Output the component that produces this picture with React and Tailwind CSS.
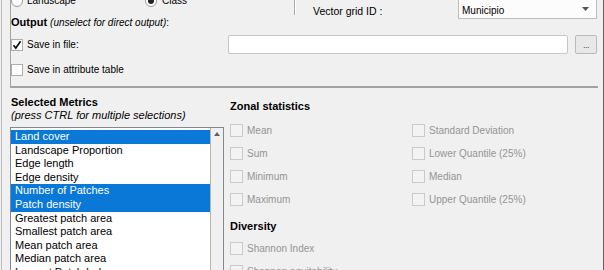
import React from "react";

function Radio({ checked }) {
  return (
    <div className="w-[12px] h-[12px] rounded-full border border-[#9a9a9a] bg-white flex items-center justify-center shrink-0">
      {checked && <div className="w-[6px] h-[6px] rounded-full bg-[#222]" />}
    </div>
  );
}

function Check({ checked }) {
  return (
    <div className="w-[12px] h-[12px] border border-[#adadad] bg-white shrink-0 flex items-center justify-center">
      {checked && (
        <svg width="10" height="10" viewBox="0 0 10 10">
          <path d="M1.5 5.2 L3.8 8 L8.6 1.2" stroke="#111" strokeWidth="1.7" fill="none" />
        </svg>
      )}
    </div>
  );
}

function DisCheck({ label }) {
  return (
    <div className="h-[23px] flex items-center gap-[4px]">
      <div className="w-[13px] h-[13px] border border-[#cacaca] bg-[#f3f3f3] shrink-0" />
      <span className="text-[10px] leading-[12px] text-[#949494]">{label}</span>
    </div>
  );
}

const items = [
  ["Land cover", true],
  ["Landscape Proportion", false],
  ["Edge length", false],
  ["Edge density", false],
  ["Number of Patches", true],
  ["Patch density", true],
  ["Greatest patch area", false],
  ["Smallest patch area", false],
  ["Mean patch area", false],
  ["Median patch area", false],
  ["Largest Patch Index", false],
  ["Shape index", false],
];

export default function App() {
  return (
    <div className="w-[604px] h-[270px] overflow-hidden bg-[#f0f0f0] flex font-['Liberation_Sans',Arial,sans-serif] text-black">
      <div className="w-[1px] ml-[1px] bg-[#bcbcbc] shrink-0" />
      <div className="flex-1 flex flex-col">
        {/* top group */}
        <div className="ml-[8px] w-[588px] h-[88px] shrink-0 border-l border-b-2 border-[#a3a3a3] flex flex-col">
          <div className="flex items-start mt-[-8px] h-[28px] shrink-0">
            <div className="w-[283px] flex items-start mt-[3px]">
              <div className="w-[134px] flex items-center gap-[4px] h-[12px]">
                <Radio />
                <span className="text-[10px] leading-[12px]">Landscape</span>
              </div>
              <div className="flex items-center gap-[5px] h-[12px]">
                <Radio checked />
                <span className="text-[10px] leading-[12px]">Class</span>
              </div>
            </div>
            <div className="w-[2px] h-[23px] border-l border-[#a8a8a8] border-r border-r-white" />
            <div className="ml-[17px] w-[145px] mt-[13px] text-[10.5px] leading-[12px]">Vector grid ID :</div>
            <div className="mt-[5px] w-[139px] h-[22px] border border-[#bdbdbd] bg-[#fcfcfc] flex items-center pt-[6px] pl-[3px] pr-[7px]">
              <span className="text-[10px] leading-[12px] flex-1">Municipio</span>
              <svg width="7" height="4" viewBox="0 0 7 4" className="mb-[4px]">
                <path d="M0 0 L7 0 L3.5 4 Z" fill="#555" />
              </svg>
            </div>
          </div>
          <div className="mt-[-4px] h-[13px] leading-[13px] shrink-0 flex items-baseline">
            <span className="text-[11px] font-bold">Output</span>
            <span className="text-[10px] italic ml-[3px]">(unselect for direct output)</span>
            <span className="text-[10px]">:</span>
          </div>
          <div className="mt-[6px] h-[19px] flex items-center shrink-0">
            <div className="w-[217px] flex items-center gap-[4px]">
              <Check checked />
              <span className="text-[10px] leading-[12px]">Save in file:</span>
            </div>
            <div className="w-[340px] h-[19px] bg-white border border-[#c6c6c6] rounded-[2px]" />
            <div className="ml-[7px] w-[22px] h-[19px] bg-[#e8e8e8] border border-[#bababa] rounded-[2px] flex items-end justify-center pb-[3px]">
              <span className="text-[9px] leading-[9px] text-[#3a4a7a] tracking-[-0.5px]">...</span>
            </div>
          </div>
          <div className="mt-[9px] h-[14px] flex items-center gap-[4px] shrink-0">
            <Check />
            <span className="text-[10px] leading-[12px]">Save in attribute table</span>
          </div>
        </div>

        {/* bottom */}
        <div className="flex flex-1 min-h-0">
          <div className="ml-[8px] w-[214px] shrink-0 flex flex-col">
            <div className="mt-[8px] pl-[1px] text-[11px] leading-[13px] font-bold">Selected Metrics</div>
            <div className="pl-[1px] text-[11px] leading-[13px] italic">(press CTRL for multiple selections)</div>
            <div className="mt-[5px] h-[200px] border border-[#828790] flex shrink-0">
              <div className="w-[199px] bg-white pt-[2px] flex flex-col shrink-0">
                {items.map(([t, sel]) => (
                  <div
                    key={t}
                    className={
                      sel
                        ? "h-[13.6px] leading-[13.6px] pl-[4px] text-[11px] bg-[#0a78d6] text-white whitespace-nowrap shrink-0"
                        : "h-[13.6px] leading-[13.6px] pl-[4px] text-[11px] text-black whitespace-nowrap shrink-0"
                    }
                  >
                    {t}
                  </div>
                ))}
              </div>
              <div className="flex-1 bg-[#f0f0f0] border-l border-[#b5b5b5] flex justify-center pt-[4px]">
                <svg width="6" height="4" viewBox="0 0 6 4">
                  <path d="M0 4 L6 4 L3 0 Z" fill="#606060" />
                </svg>
              </div>
            </div>
          </div>

          <div className="ml-[6px] flex-1 flex flex-col">
            <div className="mt-[12px] text-[11px] leading-[13px] font-bold">Zonal statistics</div>
            <div className="mt-[6px] grid grid-cols-[182px_1fr]">
              <DisCheck label="Mean" />
              <DisCheck label="Standard Deviation" />
              <DisCheck label="Sum" />
              <DisCheck label="Lower Quantile (25%)" />
              <DisCheck label="Minimum" />
              <DisCheck label="Median" />
              <DisCheck label="Maximum" />
              <DisCheck label="Upper Quantile (25%)" />
            </div>
            <div className="mt-[9px] text-[11px] leading-[13px] font-bold">Diversity</div>
            <div className="mt-[4px] flex flex-col">
              <DisCheck label="Shannon Index" />
              <DisCheck label="Shannon equitability" />
            </div>
          </div>
        </div>
      </div>
      <div className="w-[1px] bg-[#6b6060] shrink-0" />
    </div>
  );
}
